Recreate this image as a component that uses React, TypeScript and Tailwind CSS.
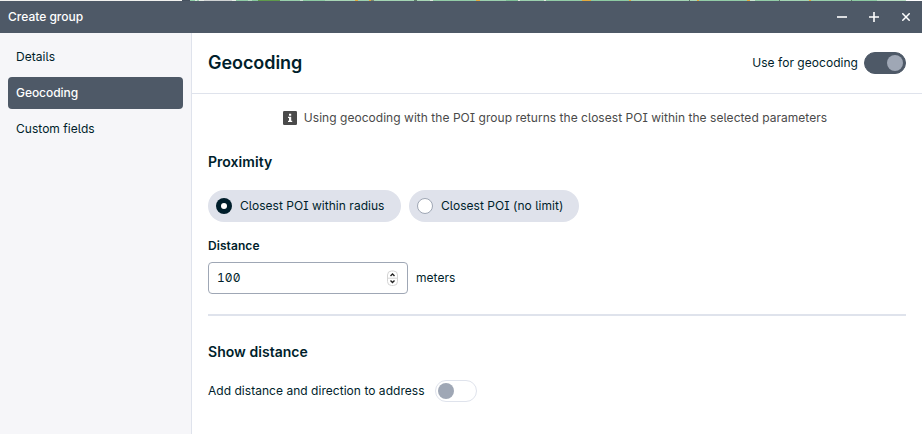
import React from 'react';
import clsx from 'clsx';

const tabs = ['Details', 'Geocoding', 'Custom fields'];

// visible sliver of the map behind the window: [color, width]
const mapStrip: [string, number][] = [
  ['#f1f1ef', 182], ['#46515f', 8], ['#8fcea8', 5], ['#d5eadb', 2], ['#9dd3b0', 2], ['#e6ebe6', 5],
  ['#cfd2d3', 28], ['#e8efe8', 4], ['#8fcba5', 12], ['#b5dcc0', 4], ['#86c79d', 6], ['#5f9a4b', 22],
  ['#98cfab', 20], ['#c9e5d1', 3], ['#8ccaa2', 22], ['#a8d6b6', 30], ['#e3a93c', 3], ['#9bd0ae', 11],
  ['#e3a93c', 2], ['#7c8a72', 3], ['#a3d4b3', 40], ['#5d7c68', 3], ['#a8d6b6', 13], ['#e0ecdf', 3],
  ['#92cca7', 43], ['#e3a93c', 4], ['#9bd0ae', 26], ['#7fc197', 12], ['#e0ecdf', 2], ['#9bd0ae', 24],
  ['#e0ecdf', 2], ['#92cca7', 36], ['#e3a93c', 9], ['#8ccaa2', 38], ['#e3a93c', 2], ['#a3d4b3', 58],
  ['#5d7c68', 1], ['#a8d6b6', 7], ['#e3a93c', 2], ['#92cca7', 48], ['#e3a93c', 3], ['#c9e5d1', 5],
  ['#92cca7', 24], ['#5d7c68', 1], ['#a3d4b3', 29], ['#e3a93c', 2], ['#98cfab', 40], ['#5d7c68', 1],
  ['#8ccaa2', 25], ['#b5dcc0', 29],
];

const Switch: React.FC<{ on?: boolean }> = ({ on }) => (
  <button
    role="switch"
    aria-checked={!!on}
    className={clsx(
      'flex h-[22px] w-[42px] shrink-0 items-center rounded-full border px-0.5',
      on ? 'justify-end border-[#4e5967] bg-[#4e5967]' : 'justify-start border-[#dfe3ec] bg-white'
    )}
  >
    <span className="h-4 w-4 rounded-full bg-[#9fa7b5]" />
  </button>
);

interface RadioPillProps {
  label: string;
  checked?: boolean;
  className: string;
}

const RadioPill: React.FC<RadioPillProps> = ({ label, checked, className }) => (
  <label className={clsx('flex h-8 items-center gap-2 rounded-full bg-[#dfe2eb] pl-2', className)}>
    <span
      className={clsx(
        'flex h-4 w-4 shrink-0 items-center justify-center rounded-full',
        checked ? 'bg-[#001e2b]' : 'border border-[#9fa7b5] bg-white'
      )}
    >
      {checked && <span className="h-1.5 w-1.5 rounded-full bg-white" />}
    </span>
    <span className="whitespace-nowrap">{label}</span>
  </label>
);

const TitleBar = () => (
  <header className="flex h-8 items-center justify-between bg-[#4e5967] pl-2 pr-3 text-white">
    <h1 className="font-medium tracking-normal">Create group</h1>
    <div className="flex items-center">
      <svg className="mr-[22px] h-2.5 w-2.5" viewBox="0 0 10 10" stroke="currentColor" strokeWidth="1.6"><path d="M0 5h10" /></svg>
      <svg className="mr-[23px] h-2.5 w-2.5" viewBox="0 0 10 10" stroke="currentColor" strokeWidth="1.6"><path d="M0 5h10M5 0v10" /></svg>
      <svg className="h-2 w-2" viewBox="0 0 8 8" stroke="currentColor" strokeWidth="1.5"><path d="M0.3 0.3l7.4 7.4M7.7 0.3l-7.4 7.4" /></svg>
    </div>
  </header>
);

const Sidebar = () => (
  <nav className="flex w-[192px] shrink-0 flex-col gap-1 border-r border-[#dfe3ec] bg-[#f6f6f9] p-2">
    {tabs.map(tab => (
      <button
        key={tab}
        className={clsx(
          'h-8 rounded-[4px] px-2 text-left',
          tab === 'Geocoding' ? 'bg-[#4e5967] font-medium tracking-[-0.05px] text-white' : ''
        )}
      >
        {tab}
      </button>
    ))}
  </nav>
);

const App: React.FC = () => {
  return (
    <div className="flex h-[434px] w-[922px] flex-col overflow-hidden bg-white font-['Inter','Liberation_Sans',sans-serif] text-[12px] leading-4 tracking-[0.035px] text-[#001e2b] [font-feature-settings:'ss02','zero']">
      <div className="flex h-px shrink-0">
        {mapStrip.map(([color, width], i) => (
          <span key={i} className="h-px shrink-0" style={{ width, background: color }} />
        ))}
      </div>
      <TitleBar />
      <div className="flex min-h-0 flex-1">
        <Sidebar />
        <main className="flex-1">
          <div className="flex h-[61px] items-center justify-between border-b border-[#dfe3ec] px-4">
            <h2 className="text-[18px] font-semibold tracking-[-0.05px]">Geocoding</h2>
            <div className="flex items-center gap-1.5">
              <span>Use for geocoding</span>
              <Switch on />
            </div>
          </div>
          <div className="px-4">
            <p className="mt-4 flex items-center justify-center pr-1 text-[#4a4a4a]">
              <svg className="mr-[7px] h-3.5 w-3.5" viewBox="0 0 14 14">
                <rect width="14" height="14" rx="1.2" fill="#4a4a4a" />
                <path d="M6 2.8h2.2v1.9H6zM5 5.7h3.2v4h1v1.4H5V9.7h1V7.1H5z" fill="#fff" />
              </svg>
              Using geocoding with the POI group returns the closest POI within the selected parameters
            </p>
            <h3 className="mt-7 text-[14px] font-semibold">Proximity</h3>
            <div className="mt-5 flex gap-2">
              <RadioPill label="Closest POI within radius" checked className="w-[193px]" />
              <RadioPill label="Closest POI (no limit)" className="w-[170px]" />
            </div>
            <h4 className="mt-4 font-semibold tracking-[0.07px]">Distance</h4>
            <div className="mt-2 flex items-center gap-2">
              <div className="flex h-8 w-[200px] items-center justify-between rounded-[4px] border border-[#9fa7b5] pl-2 pr-[9px]">
                <span className="tabular-nums">100</span>
                <svg className="h-4 w-[11px]" viewBox="0 0 11 16" fill="none">
                  <rect x="0.5" y="1" width="10" height="14.5" rx="4" stroke="#d4d4d4" />
                  <path d="M1 8.2h9" stroke="#d4d4d4" />
                  <path d="M3.5 6l2-2 2 2M3.5 10.5l2 2 2-2" stroke="#222" strokeWidth="1.4" />
                </svg>
              </div>
              <span>meters</span>
            </div>
            <hr className="mt-5 border-t-2 border-[#dfe3ec]" />
            <h3 className="mt-7 text-[14px] font-semibold">Show distance</h3>
            <div className="mt-5 flex items-center gap-2.5">
              <span>Add distance and direction to address</span>
              <Switch />
            </div>
          </div>
        </main>
      </div>
    </div>
  );
};

export default App;
